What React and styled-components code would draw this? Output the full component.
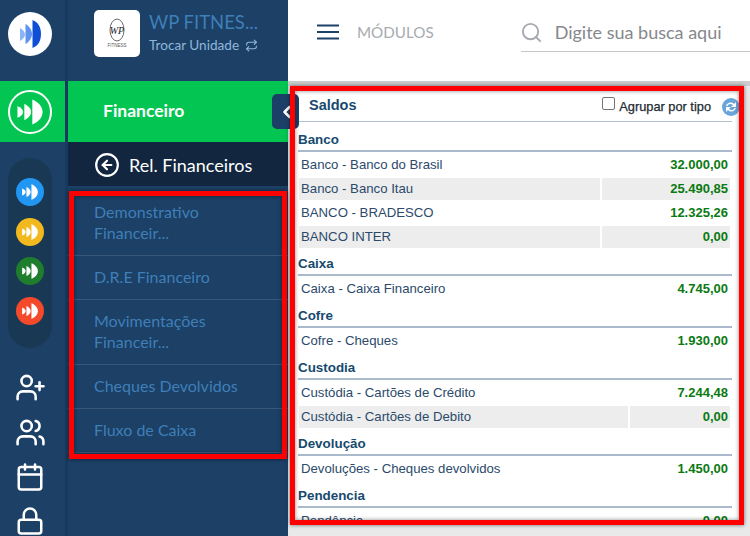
import styled, { createGlobalStyle } from 'styled-components';
import {
  Calendar,
  ChevronLeft,
  CircleArrowLeft,
  Lock,
  Repeat,
  Search,
  UserPlus,
  Users,
} from 'lucide-react';

const NAVY = '#1c4066';
const LINK = '#3f7fb8';

const Global = createGlobalStyle`
  html, body {
    margin: 0;
    height: 536px;
    overflow: hidden;
    background: #fff;
  }
`;

const Page = styled.div`
  display: flex;
  width: 750px;
  height: 536px;
  overflow: hidden;
  font-family: 'Lato', 'Noto Sans', sans-serif;
`;

const Rail = styled.aside`
  flex: 0 0 65px;
  border-right: 3px solid #173a5e;
  background: ${NAVY};
  display: flex;
  flex-direction: column;
  align-items: center;
  color: #fff;
`;

const RailLogo = styled.div`
  flex: 0 0 81px;
  align-self: stretch;
  display: flex;
  align-items: center;
  justify-content: center;
  padding: 0 5px 13px 0;
  box-sizing: border-box;
`;

const LogoCircle = styled.div`
  width: 44px;
  height: 44px;
  border-radius: 50%;
  background: #fff;
`;

const RailActive = styled.div`
  flex: 0 0 61px;
  align-self: stretch;
  box-sizing: border-box;
  padding-right: 5px;
  background: #03c552;
  display: flex;
  align-items: center;
  justify-content: center;
`;

const OutlineCircle = styled.div`
  width: 44px;
  height: 44px;
  box-sizing: border-box;
  border: 2px solid #fff;
  border-radius: 50%;
  display: flex;
  align-items: center;
  justify-content: center;
`;

const Pill = styled.div`
  margin: 16px 5px 0 0;
  width: 44px;
  height: 198px;
  box-sizing: border-box;
  padding-top: 20px;
  border-radius: 22px;
  background: #193853;
  display: flex;
  flex-direction: column;
  align-items: center;
  gap: 11.5px;
`;

const Dot = styled.div`
  flex: 0 0 28px;
  width: 28px;
  border-radius: 50%;
  background: ${(p) => p.$color};
  display: flex;
  align-items: center;
  justify-content: center;
`;

const RailIcons = styled.div`
  margin: 24px 5px 0 0;
  display: flex;
  flex-direction: column;
  align-items: center;
  gap: 14px;
`;

const Side = styled.nav`
  flex: 0 0 220px;
  background: ${NAVY};
  position: relative;
  display: flex;
  flex-direction: column;
`;

const Unit = styled.div`
  flex: 0 0 81px;
  box-sizing: border-box;
  padding: 10px 0 0 26px;
  display: flex;
  align-items: flex-start;
  gap: 9px;
`;

const UnitLogo = styled.div`
  width: 46px;
  height: 47px;
  border-radius: 5px;
  background: #fff;
  display: flex;
  align-items: center;
  justify-content: center;
`;

const UnitName = styled.div`
  font-size: 18.5px;
  line-height: 24px;
  color: ${LINK};
  white-space: nowrap;
`;

const UnitSwitch = styled.div`
  margin-top: 1px;
  display: flex;
  align-items: center;
  gap: 6px;
  font-size: 13.6px;
  line-height: 20px;
  color: #8db8dc;
  white-space: nowrap;
`;

const ModuleBar = styled.div`
  flex: 0 0 61px;
  box-sizing: border-box;
  padding: 0 0 2px 35px;
  background: #03c552;
  color: #fff;
  font-size: 17.5px;
  font-weight: 700;
  display: flex;
  align-items: center;
`;

const Collapse = styled.div`
  position: absolute;
  z-index: 2;
  left: 204px;
  top: 94px;
  width: 27px;
  height: 35px;
  border-radius: 5px;
  background: #1b3f66;
  color: #fff;
  display: flex;
  align-items: center;
  padding-left: 5px;
  box-sizing: border-box;
`;

const BackBar = styled.div`
  flex: 0 0 44px;
  box-sizing: border-box;
  padding: 2px 0 0 26px;
  background: #12263f;
  color: #fff;
  font-size: 18px;
  display: flex;
  align-items: center;
  gap: 9px;
`;

const RedFrame = styled.div`
  position: relative;
  &::after {
    content: '';
    position: absolute;
    z-index: 3;
    pointer-events: none;
    border: 5px solid #ff0000;
    box-shadow: 0 0 4px rgba(0, 0, 0, 0.55), inset 0 0 4px rgba(0, 0, 0, 0.45);
    inset: ${(p) => p.$inset};
  }
`;

const ReportList = styled(RedFrame)`
  margin-top: 5px;
`;

const ReportItem = styled.div`
  padding: 10px 40px 12px 26px;
  border-bottom: 1px solid rgba(255, 255, 255, 0.13);
  color: ${LINK};
  font-size: 16px;
  line-height: 21px;
`;

const Content = styled.main`
  flex: 1;
  min-width: 0;
  display: flex;
  flex-direction: column;
  background: #e9e9e9;
`;

const TopBar = styled.header`
  flex: 0 0 81px;
  background: #fff;
  display: flex;
  align-items: flex-start;
  padding: 17px 0 0 29px;
  box-sizing: border-box;
`;

const Burger = styled.svg`
  flex: none;
  margin-top: 7px;
`;

const Modules = styled.div`
  margin: 5px 0 0 18px;
  color: #a7abb0;
  font-size: 15.2px;
  line-height: 20px;
`;

const SearchBox = styled.div`
  margin-left: 87px;
  flex: 1;
  height: 34px;
  border-bottom: 1px solid #c4c7cb;
  display: flex;
  align-items: flex-start;
  gap: 12px;
  color: #85888c;
  font-size: 18px;
  line-height: 30px;
  white-space: nowrap;
`;

const SearchIcon = styled(Search)`
  flex: none;
  margin: 4px 0 0 -1px;
`;

const PanelArea = styled.div`
  flex: 1;
  min-height: 0;
  padding: 5px 6px 11px 2px;
  background: linear-gradient(#cdcdcd 0 5px, #e9e9e9 5px);
  display: flex;
`;

const Panel = styled(RedFrame)`
  flex: 1;
  min-width: 0;
`;

const PanelBody = styled.div`
  height: 100%;
  overflow: hidden;
  box-sizing: border-box;
  padding: 0 12px 5px 8px;
  background: #fff;
  font-family: 'Liberation Sans', Arial, sans-serif;
`;

const PanelHead = styled.div`
  height: 36px;
  box-sizing: border-box;
  margin-bottom: 2px;
  border-bottom: 1px solid #aebfd0;
  padding-left: 11px;
  display: flex;
  align-items: flex-start;
`;

const PanelTitle = styled.div`
  margin-top: 10px;
  font-size: 14.5px;
  font-weight: 700;
  line-height: 18px;
  color: #174a6e;
`;

const GroupToggle = styled.label`
  margin-left: auto;
  margin-top: 11px;
  display: flex;
  align-items: flex-start;
  font-size: 12.8px;
  line-height: 20px;
  color: #222a33;
  -webkit-text-stroke: 0.25px #222a33;
`;

const Check = styled.span`
  width: 13px;
  height: 13px;
  box-sizing: border-box;
  margin-right: 4px;
  border: 1px solid #767676;
  border-radius: 2px;
  background: #fff;
`;

const Refresh = styled.svg`
  flex: none;
  margin: 12px -8px 0 11px;
`;

const GroupTitle = styled.div`
  height: 28px;
  box-sizing: border-box;
  padding-top: 5px;
  border-bottom: 2px solid #aab9cc;
  font-size: 13.4px;
  font-weight: 700;
  line-height: 22px;
  color: #174a6e;
`;

const Rows = styled.div`
  margin: 2px 2px 0 1px;
  display: flex;
  flex-direction: column;
  gap: 2px;
`;

const Row = styled.div`
  display: flex;
  gap: 2px;
  height: 22px;
  line-height: 22px;
`;

const RowName = styled.div`
  flex: 1;
  padding-left: 2px;
  font-size: 13.2px;
  color: #2b4a6b;
  background: ${(p) => (p.$shade ? '#ededed' : 'transparent')};
`;

const RowValue = styled.div`
  flex: 0 0 ${(p) => p.$width}px;
  box-sizing: border-box;
  padding-right: 2px;
  text-align: right;
  font-size: 13px;
  font-weight: 700;
  color: #0a7a12;
  background: ${(p) => (p.$shade ? '#ededed' : 'transparent')};
`;

const reports = [
  'Demonstrativo Financeir...',
  'D.R.E Financeiro',
  'Movimentações Financeir...',
  'Cheques Devolvidos',
  'Fluxo de Caixa',
];

const groups = [
  {
    title: 'Banco',
    width: 128,
    rows: [
      ['Banco - Banco do Brasil', '32.000,00'],
      ['Banco - Banco Itau', '25.490,85'],
      ['BANCO - BRADESCO', '12.325,26'],
      ['BANCO INTER', '0,00'],
    ],
  },
  { title: 'Caixa', width: 100, rows: [['Caixa - Caixa Financeiro', '4.745,00']] },
  { title: 'Cofre', width: 100, rows: [['Cofre - Cheques', '1.930,00']] },
  {
    title: 'Custodia',
    width: 100,
    rows: [
      ['Custódia - Cartões de Crédito', '7.244,48'],
      ['Custódia - Cartões de Debito', '0,00'],
    ],
  },
  { title: 'Devolução', width: 100, rows: [['Devoluções - Cheques devolvidos', '1.450,00']] },
  { title: 'Pendencia', width: 100, rows: [['Pendência', '0,00']] },
];

// the three-wedge mark used by the module buttons
const Mark = ({ size }) => (
  <svg width={size} height={size} viewBox="0 0 28 28" fill="#fff">
    <path d="M3 9 C6 10 8 12 8 14 C8 16 6 18 3 19 Z" />
    <path d="M9 7 C12 8 15 11 15 14 C15 17 12 20 9 21 Z" />
    <path d="M16 3 C21 5 25 9 25 14 C25 19 21 23 16 25 Z" />
  </svg>
);

const App = () => {
  return (
    <Page>
      <Global />
      <Rail>
        <RailLogo>
          <LogoCircle>
            <svg width="44" height="44" viewBox="0 0 44 44">
              <path d="M12 16 C15 18 17 20 17 22.500 C17 25 15 27 12 29 Z" fill="#8ab4f8" />
              <path d="M17.500 12 C21 14 24 18 24 22 C24 26 21 30 17.500 32 Z" fill="#5f93f0" />
              <path d="M24.500 8 C30 10 33 15 33 22 C33 29 30 34 24.500 36 Z" fill="#0f4fd6" />
            </svg>
          </LogoCircle>
        </RailLogo>
        <RailActive>
          <OutlineCircle>
            <Mark size={32} />
          </OutlineCircle>
        </RailActive>
        <Pill>
          {['#2196f3', '#f2b91f', '#1f7d2e', '#f4492a'].map((c) => (
            <Dot key={c} $color={c}>
              <Mark size={20} />
            </Dot>
          ))}
        </Pill>
        <RailIcons>
          <UserPlus size={31} strokeWidth={2} />
          <Users size={31} strokeWidth={2} />
          <Calendar size={30} strokeWidth={2} />
          <Lock size={30} strokeWidth={2} />
        </RailIcons>
      </Rail>

      <Side>
        <Unit>
          <UnitLogo>
            <svg width="30" height="34" viewBox="0 0 30 34">
              <ellipse cx="15" cy="13" rx="7" ry="11" fill="none" stroke="#444" strokeWidth="0.8" />
              <text x="15" y="17" textAnchor="middle" fontSize="10" fontStyle="italic" fontFamily="Liberation Serif" fill="#222">
                WP
              </text>
              <text x="15" y="30" textAnchor="middle" fontSize="4.500" fontFamily="Liberation Sans" fill="#555">
                FITNESS
              </text>
            </svg>
          </UnitLogo>
          <div>
            <UnitName>WP FITNES...</UnitName>
            <UnitSwitch>
              Trocar Unidade
              <Repeat size={13} />
            </UnitSwitch>
          </div>
        </Unit>
        <ModuleBar>Financeiro</ModuleBar>
        <Collapse>
          <ChevronLeft size={20} strokeWidth={3} />
        </Collapse>
        <BackBar>
          <CircleArrowLeft size={26} strokeWidth={2} />
          Rel. Financeiros
        </BackBar>
        <ReportList $inset="0 1px -6px 1px">
          {reports.map((r) => (
            <ReportItem key={r}>{r}</ReportItem>
          ))}
        </ReportList>
      </Side>

      <Content>
        <TopBar>
          <Burger width="22" height="16" viewBox="0 0 22 16">
            <path d="M0 1.500H22M0 8H22M0 14.500H22" stroke={NAVY} strokeWidth="2.200" />
          </Burger>
          <Modules>MÓDULOS</Modules>
          <SearchBox>
            <SearchIcon size={23} color="#a7abb0" />
            Digite sua busca aqui
          </SearchBox>
        </TopBar>
        <PanelArea>
          <Panel $inset="0">
            <PanelBody>
              <PanelHead>
                <PanelTitle>Saldos</PanelTitle>
                <GroupToggle>
                  <Check />
                  Agrupar por tipo
                </GroupToggle>
                <Refresh width="18" height="18" viewBox="0 0 18 18">
                  <circle cx="9" cy="9" r="9" fill="#6aa5da" />
                  <path d="M4 8 C5 5 9 3 12 6 L14 4 V9 H9 L11 7 C9 5 6 6 5.500 8 Z" fill="#fff" />
                  <path d="M14 10 C13 13 9 15 6 12 L4 14 V9 H9 L7 11 C9 13 12 12 12.500 10 Z" fill="#fff" />
                </Refresh>
              </PanelHead>
              {groups.map((g) => (
                <div key={g.title}>
                  <GroupTitle>{g.title}</GroupTitle>
                  <Rows>
                    {g.rows.map(([name, value], i) => (
                      <Row key={name}>
                        <RowName $shade={i % 2 === 1}>{name}</RowName>
                        <RowValue $shade={i % 2 === 1} $width={g.width}>
                          {value}
                        </RowValue>
                      </Row>
                    ))}
                  </Rows>
                </div>
              ))}
            </PanelBody>
          </Panel>
        </PanelArea>
      </Content>
    </Page>
  );
};

export default App;
